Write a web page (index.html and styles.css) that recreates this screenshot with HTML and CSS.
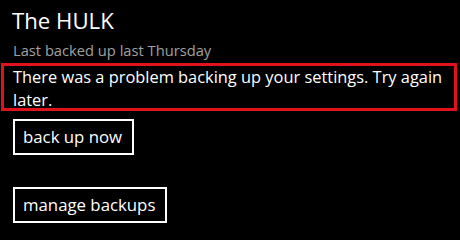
FILE: index.html
```html
<!DOCTYPE html>
<html>
<head>
<meta charset="utf-8">
<link rel="stylesheet" href="styles.css">
</head>
<body>
<div class="page">
  <div class="title">The HULK</div>
  <div class="status">Last backed up last Thursday</div>
  <div class="error">There was a problem backing up your settings. Try again later.</div>
  <div class="actions">
    <div class="btn">back up now</div>
    <div class="btn">manage backups</div>
  </div>
</div>
</body>
</html>
```

FILE: styles.css
```css
html, body {
  margin: 0;
  padding: 0;
  background: #000;
  width: 460px;
  height: 237px;
  overflow: hidden;
}
.page {
  font-family: "Open Sans", "Noto Sans", sans-serif;
  color: #fff;
  display: flex;
  flex-direction: column;
}
.title {
  font-size: 22.2px;
  line-height: 30px;
  margin: 6px 0 0 12px;
}
.status {
  font-size: 14.7px;
  line-height: 20px;
  color: #a0a0a0;
  margin: 4px 0 0 13px;
}
.error {
  margin: 3px 0 0 1px;
  width: 456px;
  height: 48px;
  box-sizing: border-box;
  border: 3px solid #e0121c;
  padding: 0 0 0 9px;
  font-size: 16.4px;
  line-height: 22.6px;
}
.actions {
  display: flex;
  flex-direction: column;
  align-items: flex-start;
  gap: 32px;
  margin: 8px 0 0 13px;
}
.btn {
  box-sizing: border-box;
  height: 36px;
  border: 2px solid #fff;
  padding: 0 10px 0 8px;
  font-size: 16.8px;
  line-height: 32px;
}
```
